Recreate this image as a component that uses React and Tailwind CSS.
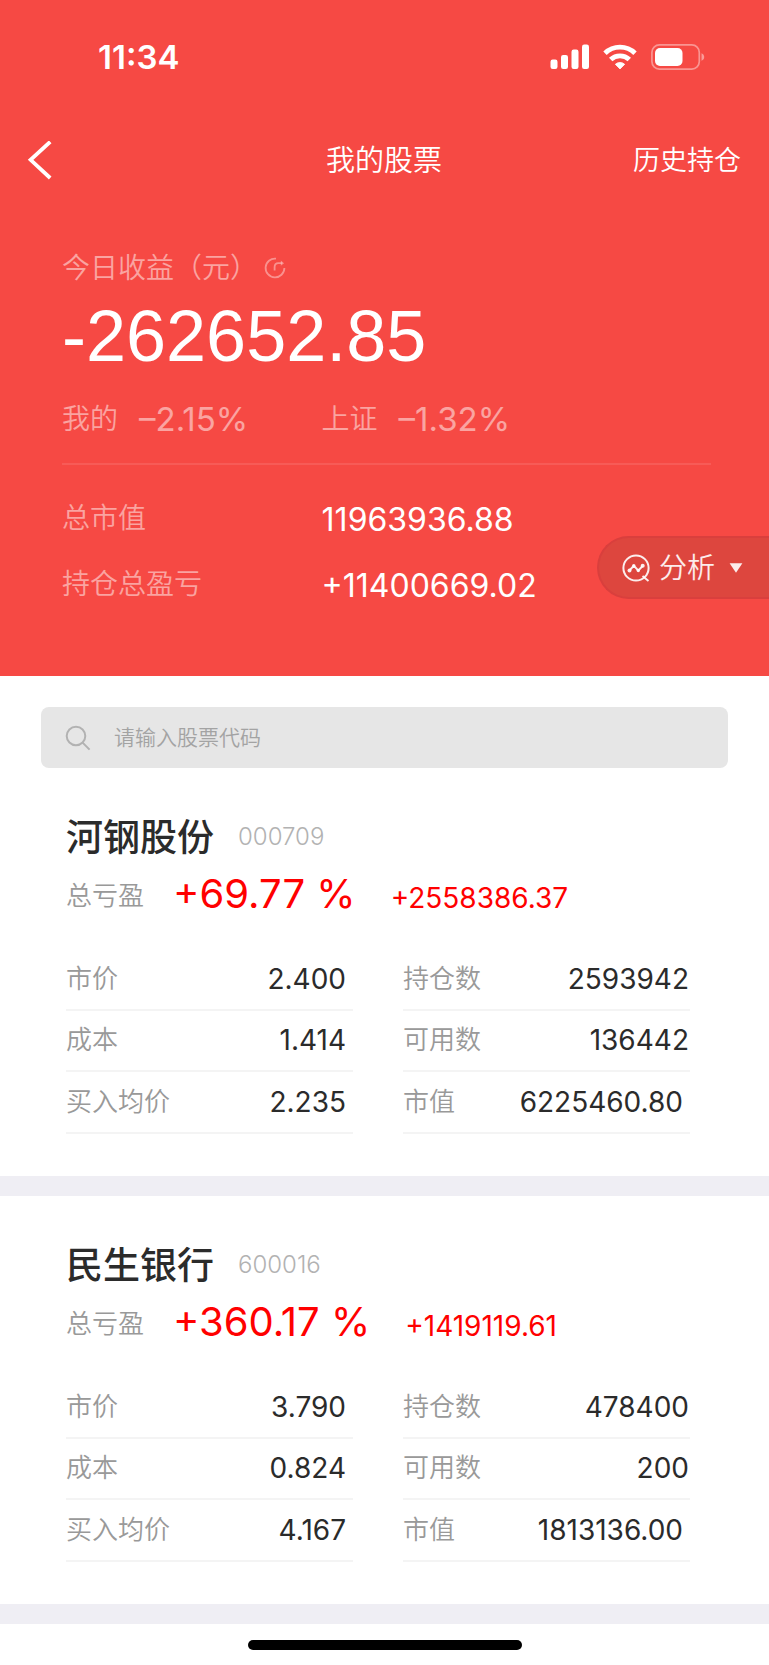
import React from "react";

const stocks = [
  {
    name: "河钢股份",
    code: "000709",
    rate: "+69.77 %",
    amount: "+2558386.37",
    left: [
      ["市价", "2.400"],
      ["成本", "1.414"],
      ["买入均价", "2.235"],
    ],
    right: [
      ["持仓数", "2593942"],
      ["可用数", "136442"],
      ["市值", "6225460.80"],
    ],
  },
  {
    name: "民生银行",
    code: "600016",
    rate: "+360.17 %",
    amount: "+1419119.61",
    left: [
      ["市价", "3.790"],
      ["成本", "0.824"],
      ["买入均价", "4.167"],
    ],
    right: [
      ["持仓数", "478400"],
      ["可用数", "200"],
      ["市值", "1813136.00"],
    ],
  },
];

function StatusBar() {
  return (
    <div className="flex h-[114px] items-center justify-between pl-[98px] pr-[64px]">
      <time className="text-[33px] font-semibold leading-none">11:34</time>
      <div className="flex items-center gap-[14px]">
        <svg width="39" height="26" viewBox="0 0 39 26" fill="currentColor" aria-hidden="true">
          <rect x="0.5" y="15.5" width="7" height="9.5" rx="2.2" />
          <rect x="11" y="11" width="7" height="14" rx="2.2" />
          <rect x="21.5" y="5.5" width="7" height="19.5" rx="2.2" />
          <rect x="32" y="0.5" width="7" height="24.5" rx="2.2" />
        </svg>
        <svg width="34" height="26" viewBox="0 0 34 26" aria-hidden="true">
          <g fill="none" stroke="currentColor" strokeWidth="4.9">
            <path d="M2 9.2a21.6 21.6 0 0 1 30 0" />
            <path d="M7.700 15.600a13.400 13.400 0 0 1 18.600 0" />
          </g>
          <path d="M17 25l-4.700-4.700a6.800 6.800 0 0 1 9.400 0z" fill="currentColor" stroke="currentColor" strokeWidth="0.8" strokeLinejoin="round" />
        </svg>
        <svg width="54" height="26" viewBox="0 0 54 26" aria-hidden="true">
          <rect x="0.9" y="0.9" width="47.400" height="24.200" rx="7.500" fill="none" stroke="currentColor" strokeOpacity="0.42" strokeWidth="1.700" />
          <rect x="4" y="4" width="27.500" height="18" rx="5" fill="currentColor" />
          <path d="M50.500 9.200c1.900.8 2.700 2.200 2.700 3.800s-.8 3-2.700 3.800z" fill="currentColor" fillOpacity="0.45" />
        </svg>
      </div>
    </div>
  );
}

function NavBar() {
  return (
    <nav className="grid h-[90px] grid-cols-[1fr_auto_1fr] items-center pl-[27px] pr-7 pt-[3px]">
      <button type="button" aria-label="返回" className="justify-self-start">
        <svg width="26" height="40" viewBox="0 0 26 40" fill="none" stroke="currentColor" strokeWidth="3.800" aria-hidden="true">
          <path d="M23.200 0.800 3.600 18.800l19.600 18.200" />
        </svg>
      </button>
      <h1 className="text-[29px] font-[350] leading-10">我的股票</h1>
      <a href="#history" className="justify-self-end text-[27px] font-[350] leading-10">
        历史持仓
      </a>
    </nav>
  );
}

function Summary() {
  return (
    <section className="pb-[68px] pl-[62px] pr-[58px] pt-11">
      <div className="flex h-10 items-center gap-[6px] text-white/50">
        <h2 className="text-[28px] font-[350] leading-10">今日收益（元）</h2>
        <button type="button" aria-label="刷新" className="text-white/40">
          <svg width="22" height="22" viewBox="0 0 22 22" fill="none" stroke="currentColor" strokeWidth="1.800" aria-hidden="true">
            <path d="M12 1.600A9.400 9.400 0 1 0 20.400 11" />
            <path d="M10.600 13.500V10c0-2.300 1.500-3.800 3.800-3.800h3.200" />
            <path d="M16.800 3.600 20 6.200l-3.200 2.600z" fill="currentColor" stroke="none" />
          </svg>
        </button>
      </div>
      <p className="mt-3 font-['Liberation_Sans',Arial,sans-serif] text-[72px] leading-[72px]">-262652.85</p>
      <div className="mt-[27px] grid h-10 grid-cols-[2fr_3fr] items-center text-white/50">
        <p className="flex items-center gap-[21px]">
          <span className="text-[28px] font-[350] leading-10">我的</span>
          <span className="text-[33px] font-normal leading-10">–2.15%</span>
        </p>
        <p className="flex items-center gap-[21px]">
          <span className="text-[28px] font-[350] leading-10">上证</span>
          <span className="text-[33px] font-normal leading-10">–1.32%</span>
        </p>
      </div>
      <hr className="mt-6 border-t-2 border-white/10" />
      <dl className="mt-[33px] grid grid-cols-[2fr_3fr] items-start gap-y-[22px]">
        <dt className="text-[28px] font-[350] leading-10 text-white/50">总市值</dt>
        <dd className="text-[32px] font-normal leading-[44px]">11963936.88</dd>
        <dt className="text-[28px] font-[350] leading-10 text-white/50">持仓总盈亏</dt>
        <dd className="text-[32px] font-normal leading-[44px]">+11400669.02</dd>
      </dl>
    </section>
  );
}

function AnalysisButton() {
  return (
    <button
      type="button"
      className="absolute bottom-[77px] right-0 flex h-[63px] items-center rounded-l-full border-2 border-r-0 border-[#d93f3d] bg-[#dd463e] pl-[23px] pr-[26px] text-white/90"
    >
      <svg width="28" height="28" viewBox="0 0 28 28" fill="none" stroke="currentColor" strokeWidth="2" aria-hidden="true">
        <circle cx="14" cy="14" r="12.600" />
        <path d="M20.500 22l6 5" />
        <path d="M7.500 16.500l4.300-4.800 4.500 5L20.500 12" strokeLinejoin="round" />
        <g fill="currentColor" stroke="none">
          <circle cx="7.500" cy="16.500" r="2" />
          <circle cx="11.800" cy="11.700" r="1.700" />
          <circle cx="16.300" cy="16.500" r="1.700" />
          <circle cx="20.700" cy="11.800" r="2" />
        </g>
      </svg>
      <span className="ml-[9px] text-[28px] font-[350] leading-10">分析</span>
      <svg className="ml-[14px]" width="14" height="10" viewBox="0 0 14 10" fill="currentColor" aria-hidden="true">
        <path d="M0.600 0.300h12.800L7 9.800z" />
      </svg>
    </button>
  );
}

function SearchBox() {
  return (
    <label className="mx-[41px] mt-[31px] flex h-[61px] items-center gap-[23px] rounded-lg bg-[#e6e6e6] px-6">
      <svg width="26" height="26" viewBox="0 0 26 26" fill="none" stroke="#b2b2b2" strokeWidth="2" aria-hidden="true">
        <circle cx="11" cy="11" r="9.300" />
        <path d="M17.600 17.600l7 7" />
      </svg>
      <input
        type="text"
        aria-label="股票代码"
        placeholder="请输入股票代码"
        className="min-w-0 flex-1 bg-transparent text-[21px] font-[350] leading-8 text-[#2b2b2b] outline-none placeholder:text-[#a3a3a3]"
      />
    </label>
  );
}

function Figures({ rows, insetAll }) {
  return (
    <dl className="grid h-[185px] grid-rows-3">
      {rows.map(([label, value], i) => (
        <div
          key={label}
          className={
            "flex items-center justify-between border-b-2 border-[#f4f4f4] " +
            (insetAll || i === rows.length - 1 ? "pr-[7px]" : "pr-[1px]")
          }
        >
          <dt className="text-[26px] font-[350] leading-10 text-[#999999]">{label}</dt>
          <dd className="text-[28px] font-normal leading-10 text-[#2b2b2b]">{value}</dd>
        </div>
      ))}
    </dl>
  );
}

function StockCard({ stock }) {
  return (
    <article className="border-b-[20px] border-[#efeef4] pb-[42px] pl-[66px] pr-[79px] pt-10">
      <div className="flex h-[58px] items-center gap-6">
        <h2 className="text-[37px] font-medium leading-none text-[#2b2b2b]">{stock.name}</h2>
        <span className="text-[24px] font-light leading-none text-[#b2b2b2]">{stock.code}</span>
      </div>
      <div className="flex h-[60px] items-center gap-[29px]">
        <span className="text-[26px] font-[350] leading-10 text-[#999999]">总亏盈</span>
        <p className="flex items-baseline gap-[35px] text-[#ff0000]">
          <span className="text-[40px] font-normal leading-10">{stock.rate}</span>
          <span className="text-[28px] font-normal leading-10">{stock.amount}</span>
        </p>
      </div>
      <div className="mt-[23px] grid grid-cols-2 gap-[50px]">
        <Figures rows={stock.left} insetAll />
        <Figures rows={stock.right} />
      </div>
    </article>
  );
}

export default function App() {
  return (
    <div className="min-h-screen bg-white font-[Inter,'Noto_Sans_CJK_SC',sans-serif]">
      <header className="relative bg-[#f64944] text-white">
        <StatusBar />
        <NavBar />
        <Summary />
        <AnalysisButton />
      </header>
      <main>
        <SearchBox />
        {stocks.map((stock) => (
          <StockCard key={stock.code} stock={stock} />
        ))}
      </main>
      <footer className="flex h-[41px] items-center justify-center">
        <div className="h-[10px] w-[274px] rounded-full bg-black" />
      </footer>
    </div>
  );
}
